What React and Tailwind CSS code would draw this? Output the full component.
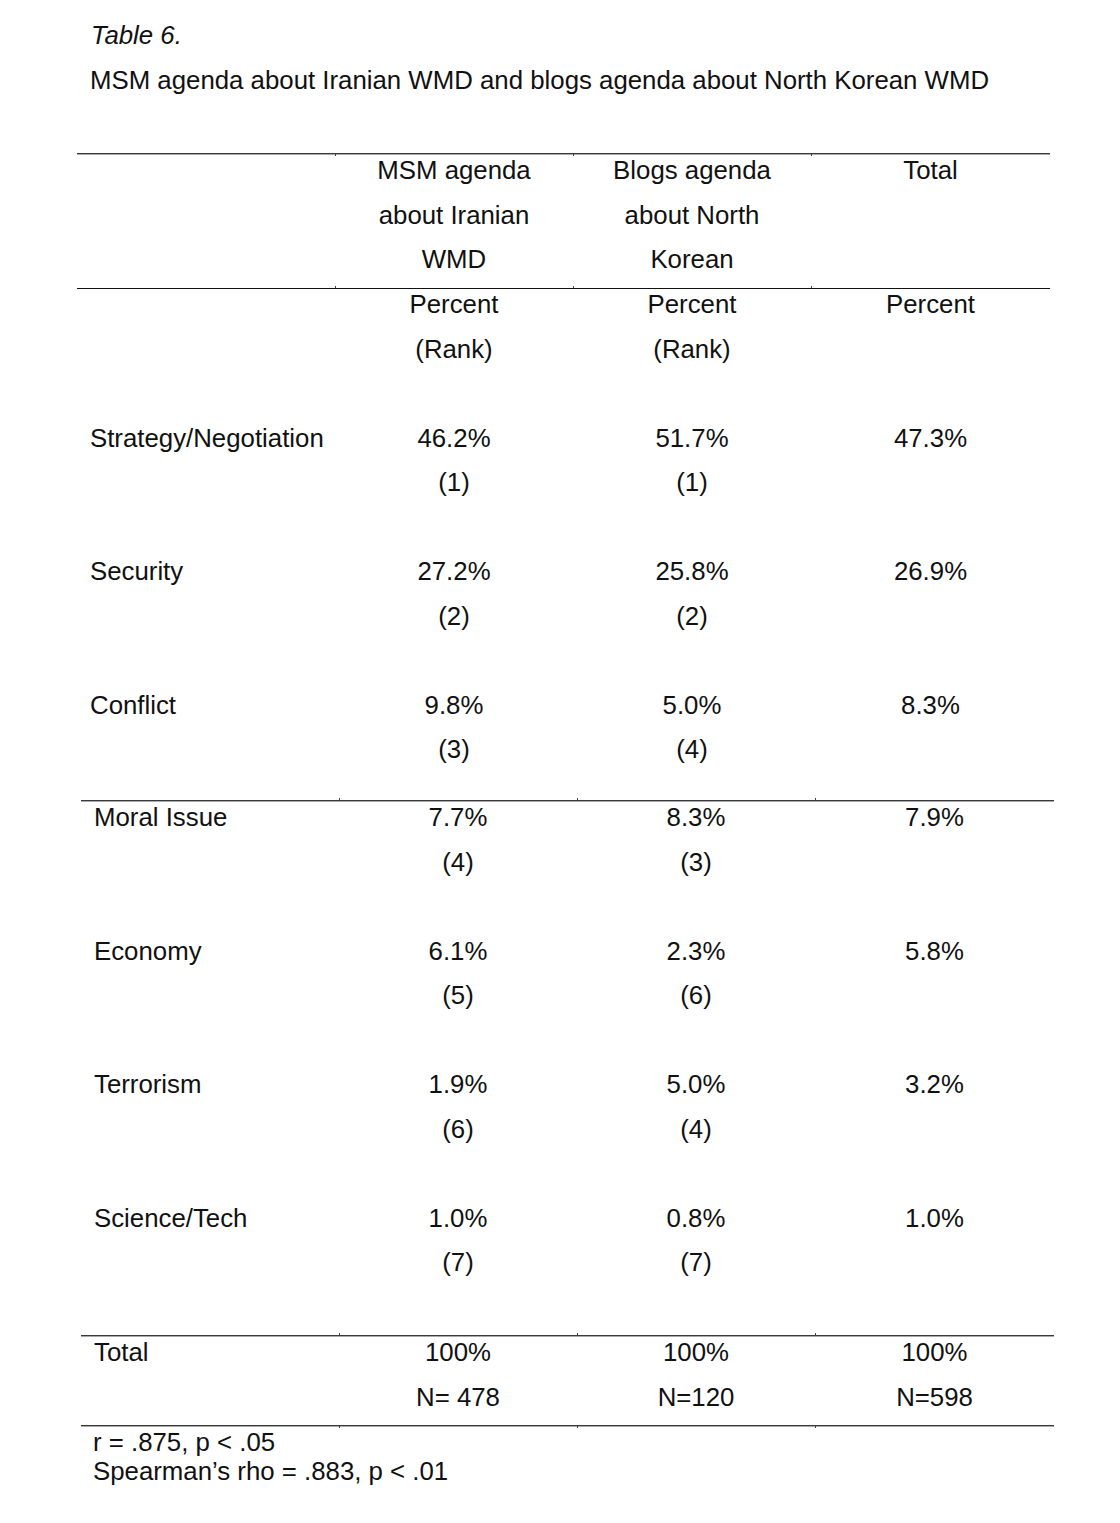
import React from "react";

const font = { fontFamily: '"Liberation Sans", Arial, sans-serif' };

function Cell({ lines, left, pad }) {
  return (
    <div className={left ? pad : "text-center"}>
      <div className="-mt-[7px]">
        {lines.map((l, i) => (
          <div key={i} className="h-[44.5px] whitespace-nowrap">
            {l || "\u00a0"}
          </div>
        ))}
      </div>
    </div>
  );
}

function Row({ cells, h, pad }) {
  return (
    <div className={`grid grid-cols-[258px_238px_238px_239px] ${h}`}>
      {cells.map((c, i) => (
        <Cell key={i} lines={c} left={i === 0} pad={pad} />
      ))}
    </div>
  );
}

function Rule({ double, ticks, up }) {
  return (
    <div className="relative">
      <div className={double ? "h-px bg-[#3a3a3a]" : "h-px bg-[#111]"} />
      {double && <div className="h-px bg-[#a8a8a8]" />}
      {ticks &&
        ticks.map((t) => (
          <div
            key={t}
            className={
              up
                ? "absolute -top-[2px] h-[2px] w-px bg-[#444]"
                : "absolute top-px h-[2px] w-px bg-[#444]"
            }
            style={{ left: t }}
          />
        ))}
    </div>
  );
}

const upperRows = [
  ["Strategy/Negotiation", "46.2%", "51.7%", "47.3%"],
  ["Security", "27.2%", "25.8%", "26.9%"],
  ["Conflict", "9.8%", "5.0%", "8.3%"],
];
const upperRanks = ["(1)", "(1)", "(2)", "(2)", "(3)", "(4)"];

const lowerRows = [
  ["Moral Issue", "7.7%", "8.3%", "7.9%", "(4)", "(3)"],
  ["Economy", "6.1%", "2.3%", "5.8%", "(5)", "(6)"],
  ["Terrorism", "1.9%", "5.0%", "3.2%", "(6)", "(4)"],
  ["Science/Tech", "1.0%", "0.8%", "1.0%", "(7)", "(7)"],
];

export default function App() {
  const ticks = [258, 496, 734];

  const bCol2 = ["Percent", "(Rank)", ""];
  const bCol3 = ["Percent", "(Rank)", ""];
  const bCol4 = ["Percent", "", ""];
  upperRows.forEach((r, i) => {
    bCol2.push(r[1], upperRanks[i * 2], "");
    bCol3.push(r[2], upperRanks[i * 2 + 1], "");
    bCol4.push(r[3], "", "");
  });
  const labelB = ["", "", ""];
  upperRows.forEach((r) => labelB.push(r[0], "", ""));

  const labelC = [];
  const c2 = [];
  const c3 = [];
  const c4 = [];
  lowerRows.forEach((r) => {
    labelC.push(r[0], "", "");
    c2.push(r[1], r[4], "");
    c3.push(r[2], r[5], "");
    c4.push(r[3], "", "");
  });

  return (
    <div
      className="w-[1120px] h-[1523px] bg-white text-[#111] text-[25.8px] leading-[44.5px] overflow-hidden"
      style={font}
    >
      <div className="pt-[13px]">
        <div className="pl-[91px] italic">Table 6.</div>
        <div className="pl-[90px] whitespace-nowrap">
          MSM agenda about Iranian WMD and blogs agenda about North Korean WMD
        </div>
      </div>

      <div className="ml-[77px] w-[973px] mt-[51px]">
        <Rule double ticks={ticks} />
        <Row
          h="h-[133px]"
          pad="pl-[13px]"
          cells={[
            [""],
            ["MSM agenda", "about Iranian", "WMD"],
            ["Blogs agenda", "about North", "Korean"],
            ["Total"],
          ]}
        />
        <Rule ticks={ticks} up />
        <Row
          h="h-[511px]"
          pad="pl-[13px]"
          cells={[labelB, bCol2, bCol3, bCol4]}
        />
      </div>

      <div className="ml-[81px] w-[973px]">
        <Rule double ticks={ticks} up />
        <Row h="h-[533px]" pad="pl-[13px]" cells={[labelC, c2, c3, c4]} />
        <Rule double ticks={ticks} up />
        <Row
          h="h-[88px]"
          pad="pl-[13px]"
          cells={[
            ["Total"],
            ["100%", "N= 478"],
            ["100%", "N=120"],
            ["100%", "N=598"],
          ]}
        />
        <Rule double ticks={ticks} />
        <div className="pl-[12px] leading-[29px] pt-px">
          <div>r = .875, p &lt; .05</div>
          <div>Spearman’s rho = .883, p &lt; .01</div>
        </div>
      </div>
    </div>
  );
}
